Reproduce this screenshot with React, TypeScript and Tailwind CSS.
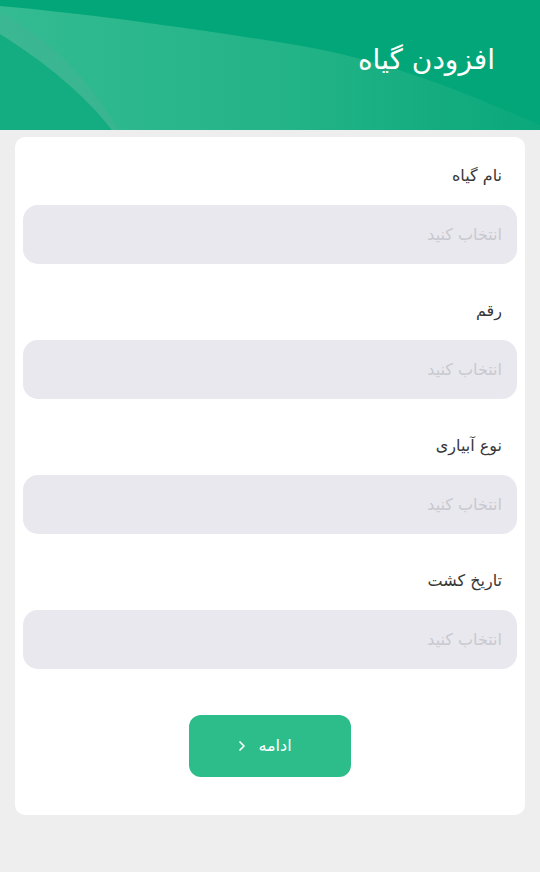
import { ChevronLeft } from "lucide-react";

const fields = ["نام گیاه", "رقم", "نوع آبیاری", "تاریخ کشت"];

function HeaderWaves() {
  return (
    <svg
      className="absolute inset-0 h-full w-full"
      viewBox="0 0 540 130"
      preserveAspectRatio="none"
      aria-hidden="true"
    >
      <defs>
        <linearGradient id="light" x1="0" y1="0" x2="1" y2="0">
          <stop offset="0" stopColor="#34bb91" />
          <stop offset="0.55" stopColor="#22b386" />
          <stop offset="1" stopColor="#0aa87b" />
        </linearGradient>
      </defs>
      <rect width="540" height="130" fill="#03a679" />
      <path
        d="M0,6 C90,14 190,28 290,44 C390,60 470,95 540,125 L540,130 L0,130 Z"
        fill="url(#light)"
      />
      <path d="M0,34 C45,62 85,95 112,130 L0,130 Z" fill="#14ac81" />
      <path
        d="M0,12 C50,40 90,80 118,130 L112,130 C85,95 45,62 0,34 Z"
        fill="#3fb593"
        opacity="0.7"
      />
    </svg>
  );
}

export default function App() {
  return (
    <div
      dir="rtl"
      className="min-h-[872px] bg-[#eeeeee] pb-[57px]"
      style={{ fontFamily: '"DejaVu Sans", sans-serif' }}
    >
      <header className="relative h-[130px] overflow-hidden">
        <HeaderWaves />
        <h1 className="relative pr-[45px] pt-[42px] text-[28px] leading-9 text-white">
          افزودن گیاه
        </h1>
      </header>

      <div className="mx-[15px] mt-[7px] rounded-[10px] bg-white px-2 pt-[27px] pb-[38px]">
        {fields.map((label, i) => (
          <div key={label} className={i > 0 ? "mt-[35px]" : ""}>
            <label className="mb-[17px] block pr-[15px] text-[16px] leading-6 text-[#383838]">
              {label}
            </label>
            <div className="flex h-[59px] items-center rounded-[15px] bg-[#e8e8ee] pr-[15px] text-[16px] text-[#c8c8d0]">
              انتخاب کنید
            </div>
          </div>
        ))}

        <div className="mt-[46px] flex justify-center">
          <button className="flex h-[62px] w-[162px] items-center justify-center gap-2 rounded-[12px] bg-[#2dbd8a] pr-[14px] text-[16px] text-white">
            <span>ادامه</span>
            <ChevronLeft className="h-4 w-4 rotate-180" strokeWidth={2.5} />
          </button>
        </div>
      </div>
    </div>
  );
}
